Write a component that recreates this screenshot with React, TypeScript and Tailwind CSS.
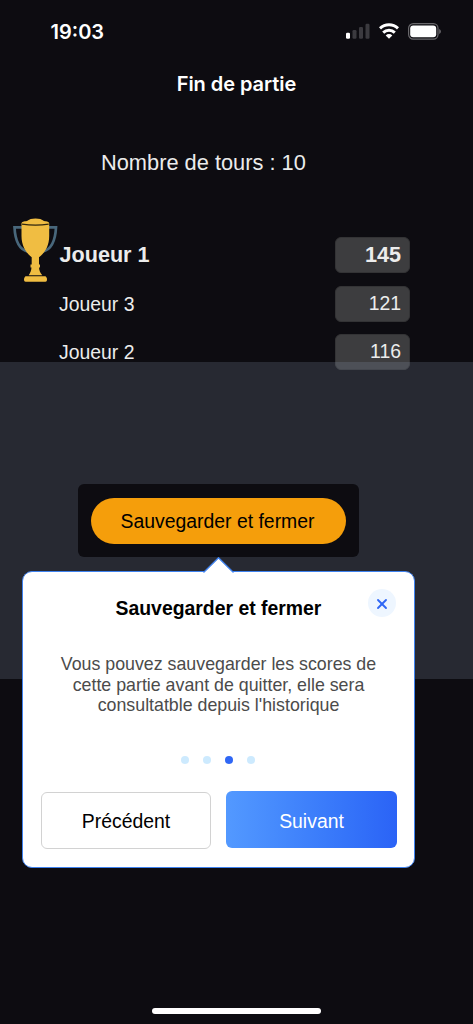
import { X } from "lucide-react";

const players = [
  { name: "Joueur 1", score: 145 },
  { name: "Joueur 3", score: 121 },
  { name: "Joueur 2", score: 116 },
];

const steps = [1, 2, 3, 4];
const currentStep = 3;

const buttonStyle = "box-border rounded-[6px] text-[19.4px]";

const StatusBar = () => (
  <div className="flex h-[62px] items-center justify-between pl-[50.5px] pr-[32px] font-[Inter] text-white">
    <span className="mt-[2px] text-[20px] font-semibold leading-6">
      19:03
    </span>
    <div className="flex items-center gap-[9px]">
      <svg width="24" height="16" viewBox="0 0 24 16">
        <rect x="0" y="9.7" width="4" height="6" rx="1.2" fill="#fff" />
        <rect x="6.5" y="7" width="4" height="8.7" rx="1.2" fill="#3b3a3f" />
        <rect x="13" y="4" width="4" height="11.7" rx="1.2" fill="#3b3a3f" />
        <rect x="19.5" y="0.7" width="4" height="15" rx="1.2" fill="#3b3a3f" />
      </svg>
      <svg width="20" height="16" viewBox="0 0 20 16" fill="none">
        <path d="M1 5.4A13 13 0 0 1 19 5.4" stroke="#fff" strokeWidth="2.9" />
        <path d="M4.2 9.6A8.3 8.3 0 0 1 15.8 9.6" stroke="#fff" strokeWidth="2.9" />
        <path d="M10 15.7L6.7 12.5A4.6 4.6 0 0 1 13.3 12.5Z" fill="#fff" />
      </svg>
      <svg width="33" height="17" viewBox="0 0 33 17">
        <rect x="0.6" y="0.7" width="29.4" height="15.4" rx="4.6" fill="none" stroke="#69686c" strokeWidth="1.2" />
        <rect x="2.2" y="2.4" width="26" height="11.8" rx="3" fill="#fff" />
        <path d="M31.2 6v5c1-.4 1.7-1.3 1.7-2.5S32.2 6.4 31.2 6Z" fill="#69686c" />
      </svg>
    </div>
  </div>
);

const Trophy = () => (
  <svg width="46" height="65" viewBox="0 0 46 65">
    <path
      d="M10 9.3H1.5C2 20 5 31.5 15 33.7M35 9.3H43C42.5 20 39.5 31.5 29.5 33.7"
      fill="none"
      stroke="#48677b"
      strokeWidth="2.7"
    />
    <path
      d="M8.5 5.5C8.5 3.5 11 3.3 14 2.9C16 1.2 19 .4 22.5 .4S29 1.2 31 2.9C34 3.3 36.2 3.5 36.2 5.5V18C36.2 28 32 34.5 26 39.3V46.5H27V49.5H26C26.2 53 27.3 55 29.3 57.3H15.7C17.2 55 18.3 53 18.5 49.5H17.5V46.5H18.7V39.3C13 34.5 8.5 28 8.5 18Z"
      fill="#f0bd42"
    />
    <path
      d="M12.5 58.3H32.5C33.5 59.3 34 60 34 61.5C34 63.5 33 63.8 31 63.8H14C12 63.8 11 63.5 11 61.5C11 60 11.5 59.3 12.5 58.3Z"
      fill="#f0bd42"
    />
    <path d="M9 6.2Q22.500 8 35.700 6.200" fill="none" stroke="#30270f" strokeWidth="1.2" />
  </svg>
);

const Scores = () => (
  <div className="mt-[59px] flex pl-[13px] pr-[63px]">
    <div className="-mt-[19px] w-[46px]">
      <Trophy />
    </div>
    <div className="flex grow flex-col gap-[12.5px]">
      {players.map((player, index) => (
        <div
          key={player.name}
          className={`flex h-9 items-center justify-between ${
            index === 0 ? "text-[21.6px] font-bold" : "text-[19.4px]"
          }`}
        >
          <span className={index === 0 ? "pl-[0.5px]" : "pt-[2px]"}>
            {player.name}
          </span>
          <span className="flex h-9 w-[75px] items-center justify-end rounded-[6px] border border-[#333335] bg-[#3d3d3f] pr-[8px]">
            {player.score}
          </span>
        </div>
      ))}
    </div>
  </div>
);

const Popover = () => (
  <div className="relative mt-[14px] ml-[22px] h-[297px] w-[393px] rounded-[10px] border border-[#3f82ef] bg-white px-[18px]">
    <svg
      className="absolute -top-[15px] left-[180px]"
      width="31"
      height="18"
      viewBox="0 0 31 18"
    >
      <path d="M1 15.5L15.5 1L30 15.5V18H1Z" fill="#fff" />
      <path d="M0.5 15.5L15.5 0.7L30.500 15.5" fill="none" stroke="#3f82ef" strokeWidth="1.3" />
    </svg>
    <button className="absolute top-[17px] right-[18px] flex h-7 w-7 items-center justify-center rounded-full bg-[#eef6ff] pt-px text-[#2f67f5]">
      <X size={16} strokeWidth={2.8} />
    </button>
    <h2 className="mt-[24px] text-center text-[19.4px] leading-6 font-bold text-black">
      Sauvegarder et fermer
    </h2>
    <p className="mt-[34px] text-center text-[17.8px] leading-[20.7px] text-[#4b4b4b]">
      Vous pouvez sauvegarder les scores de
      <br />
      cette partie avant de quitter, elle sera
      <br />
      consultatble depuis l'historique
    </p>
    <div className="mt-[40px] flex justify-center gap-[14px] pr-[2px]">
      {steps.map((step) => (
        <span
          key={step}
          className={`h-2 w-2 rounded-full ${
            step === currentStep ? "bg-[#2f67f5]" : "bg-[#cdeafe]"
          }`}
        />
      ))}
    </div>
    <div className="mt-[27px] flex gap-[15px]">
      <button
        className={`${buttonStyle} mt-px h-[57px] w-[170px] shrink-0 border border-[#d2d2d2] bg-white pt-px text-black`}
      >
        Précédent
      </button>
      <button
        className={`${buttonStyle} h-[57px] w-[171px] shrink-0 bg-linear-to-r from-[#5399ff] to-[#2b63f6] pt-[3px] text-white`}
      >
        Suivant
      </button>
    </div>
  </div>
);

const App = () => {
  return (
    <main className="relative h-[1024px] w-[473px] overflow-hidden bg-[#0d0c11] font-['Liberation_Sans',sans-serif] text-[#ececec]">
      <StatusBar />
      <h1 className="mt-[10px] text-center font-[Inter] text-[20px] leading-6 font-semibold tracking-[-0.05px] text-white">
        Fin de partie
      </h1>
      <p className="mt-[53px] mb-[60px] pl-[101px] text-[21.8px] leading-7">
        Nombre de tours : 10
      </p>
      <Scores />

      {/* tour overlay */}
      <div className="absolute top-[362px] left-0 h-[317px] w-full bg-[#8fa1b8]/20" />
      <div className="absolute top-[484px] left-0 w-full">
        <div className="ml-[78px] flex h-[73px] w-[281px] items-center justify-center rounded-[6px] bg-[#0d0c11]">
          <button className="h-[46px] w-[255px] rounded-full bg-[#f59e0b] pt-[2px] pr-[2px] text-[19.4px] text-black">
            Sauvegarder et fermer
          </button>
        </div>
        <Popover />
      </div>

      <div className="absolute bottom-[10px] left-[152px] h-[6px] w-[169px] rounded-full bg-white" />
    </main>
  );
};

export default App;
